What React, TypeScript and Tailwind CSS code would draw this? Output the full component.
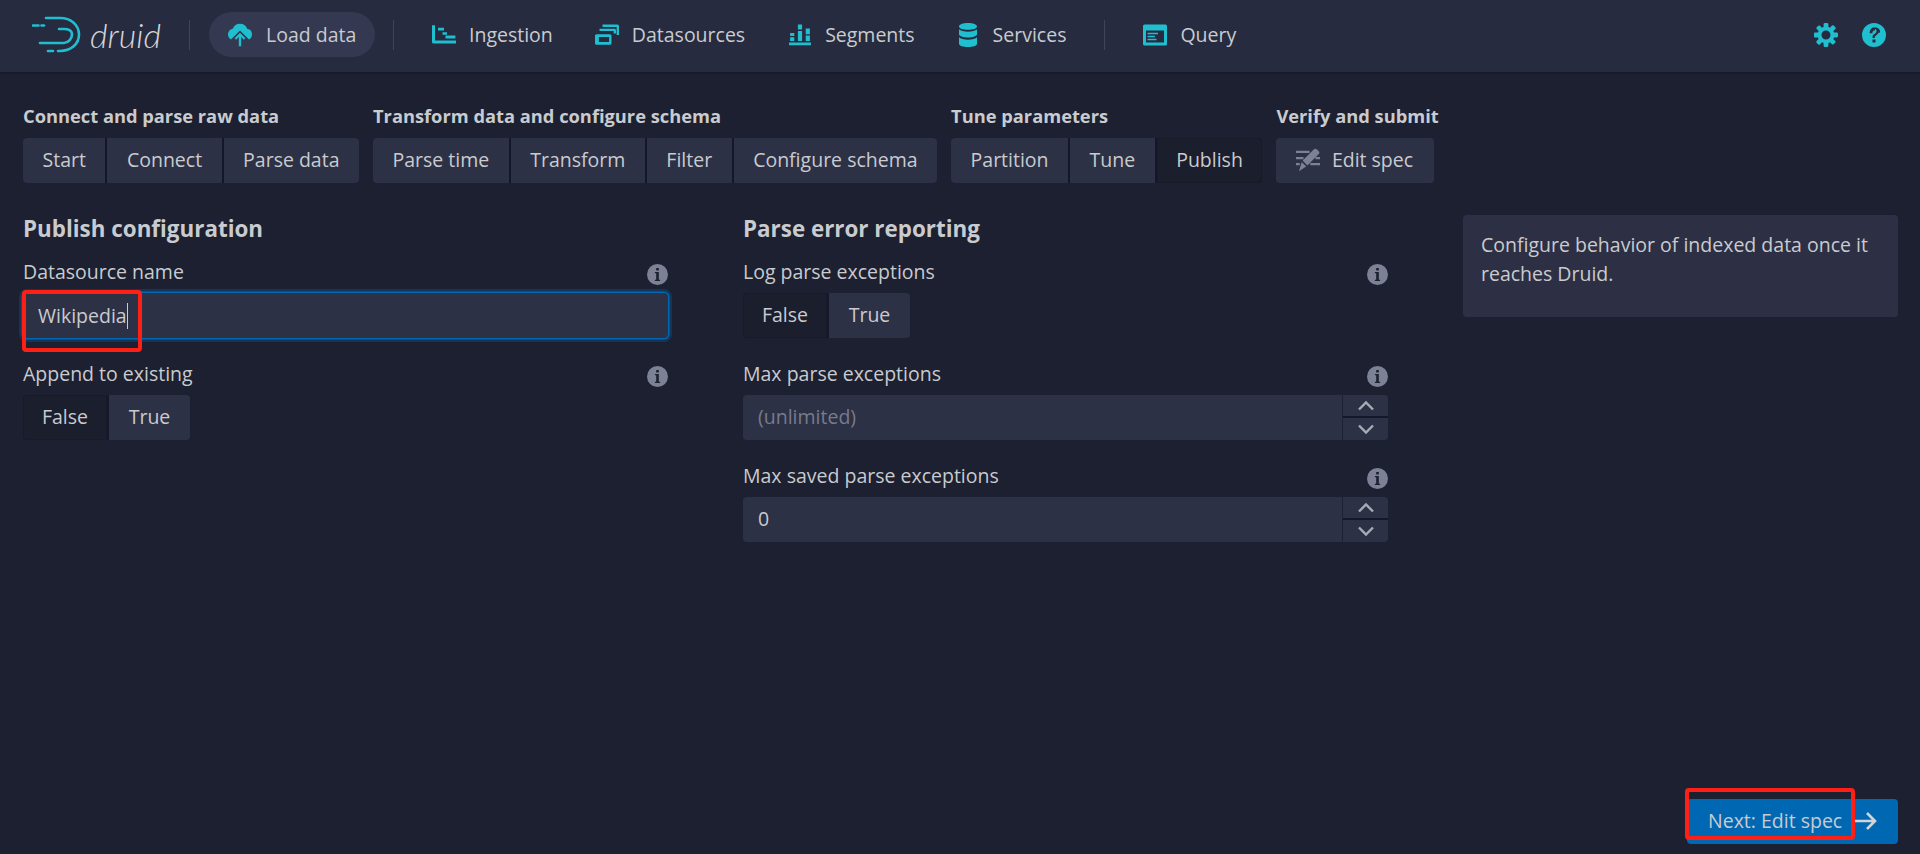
import type { ReactNode } from "react";

const TEAL = "#1fbfcf";

function Icon({ d, size = 24, color = TEAL, className = "" }: { d: string; size?: number; color?: string; className?: string }) {
  return (
    <svg width={size} height={size} viewBox="0 0 16 16" fill={color} className={className}>
      <path fillRule="evenodd" d={d} />
    </svg>
  );
}

const COG =
  "M15.19 6.39h-1.85c-.11-.37-.27-.71-.45-1.04l1.36-1.36c.31-.31.31-.82 0-1.13l-1.13-1.13a.803.803 0 00-1.13 0l-1.36 1.36c-.33-.17-.67-.33-1.04-.44V.79c0-.44-.36-.8-.8-.8h-1.6c-.44 0-.8.36-.8.8v1.86c-.39.12-.75.28-1.1.47l-1.3-1.3c-.3-.3-.79-.3-1.09 0L1.82 2.91c-.3.3-.3.79 0 1.09l1.3 1.3c-.2.34-.36.71-.48 1.1H.79c-.44 0-.8.36-.8.8v1.6c0 .44.36.8.8.8h1.85c.11.37.27.71.45 1.04l-1.36 1.36c-.31.31-.31.82 0 1.13l1.13 1.13c.31.31.82.31 1.13 0l1.36-1.36c.33.18.67.33 1.04.44v1.86c0 .44.36.8.8.8h1.6c.44 0 .8-.36.8-.8v-1.86c.39-.12.75-.28 1.1-.47l1.3 1.3c.3.3.79.3 1.09 0l1.09-1.09c.3-.3.3-.79 0-1.09l-1.3-1.3c.19-.35.36-.71.48-1.1h1.85c.44 0 .8-.36.8-.8v-1.6a.816.816 0 00-.81-.79zm-7.2 4.6c-1.66 0-3-1.34-3-3s1.34-3 3-3 3 1.34 3 3-1.34 3-3 3z";
const HELP =
  "M8 0a8 8 0 100 16A8 8 0 008 0zm1 13H7v-2h2v2zm1.93-6.52c-.14.32-.3.59-.5.81l-.66.65-.71.59c-.2.18-.37.38-.48.6-.11.22-.08.42-.08.87H7c0-.63.03-1.04.14-1.35.11-.31.27-.57.46-.78.2-.21.42-.4.67-.56.25-.16.48-.33.69-.52.21-.19.38-.39.51-.62.13-.23.2-.52.2-.87 0-.25-.05-.47-.14-.65a1.2 1.2 0 00-.77-.63C8.6 4.98 8.45 5 8.3 5c-.5 0-.8.2-1.03.5-.23.3-.34.8-.34 1.3H5.1c0-.62.07-1.2.27-1.7.2-.5.46-.9.8-1.25.33-.34.73-.6 1.2-.79A4.3 4.3 0 018.9 3c.6 0 1.05.1 1.45.27.4.17.72.4.96.66.24.26.41.55.52.85.11.3.17.6.17.87 0 .33-.07.61-.17.83z";
const INFO =
  "M8 0a8 8 0 100 16A8 8 0 008 0zM7 3h2v2H7V3zm3 10H6v-1h1V7H6V6h3v6h1v1z";
const DATABASE =
  "M8 4.5c3.3 0 6-1 6-2.25S11.3 0 8 0 2 1 2 2.25 4.7 4.5 8 4.5zM2 4.2v3.3C2 8.7 4.7 9.7 8 9.7s6-1 6-2.2V4.2c-1 1-3.3 1.6-6 1.6S3 5.2 2 4.2zm0 5.3v4.25C2 15 4.7 16 8 16s6-1 6-2.25V9.5c-1 1-3.3 1.6-6 1.6s-5-.6-6-1.6z";
const APPLICATION =
  "M1 1h14a1 1 0 011 1v12a1 1 0 01-1 1H1a1 1 0 01-1-1V2a1 1 0 011-1zm1 4v8h12V5H2zm1 1.5h7v1H3v-1zm0 2h5v1H3v-1zm0 2h6v1H3v-1z";
const GANTT =
  "M0 1.5h2V11.6H16v2H1a1 1 0 01-1-1zM4 3.2h4v1.8H4zM7 6.2h3v1.6H7zM9 8.4h6.6v1.9H9z";
const MULTI =
  "M5 1h10a1 1 0 011 1v6h-1.6V2.6H5zM3 3.8h10a1 1 0 011 1V7h-1.6V5.4H3zM1 7.5h9a1 1 0 011 1v5a1 1 0 01-1 1H1a1 1 0 01-1-1v-5a1 1 0 011-1zm1.6 1.9v3.2h6.8V9.4z";
const STACKED =
  "M6.6 1h2.8v3.4H6.6zM6.6 5.3h2.8v6.7H6.6zM1.4 6.7h2.8v2H1.4zM1.4 9.5h2.8V12H1.4zM11.8 3.7h2.8v3.8h-2.8zM11.8 8.4h2.8V12h-2.8zM.7 13h14.6v1.8H.7z";
const CLOUD =
  "M8 .5a5.2 5.2 0 014.8 3.3A3.9 3.9 0 0116 7.6c0 1.5-.8 2.8-2 3.4L8 5 2 11A3.8 3.8 0 010 7.6c0-1.8 1.2-3.4 3-3.8h.2A5.2 5.2 0 018 .5zM8 6.5l3.6 3.6-1 1L8.8 9.3V15.5H7.2V9.3l-1.8 1.8-1-1L8 6.5z";
const EDIT =
  "M12 .8c.5-.5 1.3-.5 1.8 0l1.4 1.4c.5.5.5 1.3 0 1.8L7.6 11.6 4.4 8.4zM3.8 9.4l3 3L2 15.5zM0 1.8h9v1.5H0zM0 6h5v1.5H0zM13 6h3v1.5h-3zM0 10h2.5v1.5H0zM9.5 10H16v1.5H9.5z";

function Logo() {
  return (
    <div className="flex items-center">
      <svg width="50" height="40" viewBox="0 0 50 40" fill="none" stroke={TEAL} strokeWidth="2.6" strokeLinecap="round">
        <path d="M14 3H28C39 3 47 10 47 19.5S39 36 28 36H26" />
        <path d="M8 28H32C36 28 40 24 40 19.5S36 14 32 14H27" />
        <path d="M1 10.5H6.5" />
        <path d="M9.5 10.5H12" />
        <path d="M16 36H21" />
      </svg>
      <span className="ml-[8px] text-[34px] leading-none font-light italic text-[#d4d5d8] [font-family:Lato,sans-serif]">druid</span>
    </div>
  );
}

function Sep() {
  return <div className="h-[30px] w-px bg-[#3f445a]" />;
}

function NavItem({ icon, label, className = "" }: { icon: string; label: string; className?: string }) {
  return (
    <div className={`flex items-center gap-[13px] ${className}`}>
      <Icon d={icon} />
      <span>{label}</span>
    </div>
  );
}

function StepButton({ children, active, first, last }: { children: ReactNode; active?: boolean; first?: boolean; last?: boolean }) {
  return (
    <div
      className={`flex h-[45px] items-center px-[19.5px] pb-[2px] ${active ? "bg-[#1b1e2d] shadow-[inset_0_0_0_1px_#171a28]" : "bg-[#2d3145]"} ${first ? "rounded-l-[4px]" : "ml-[2px]"} ${last ? "rounded-r-[4px]" : ""}`}
    >
      {children}
    </div>
  );
}

function StepGroup({ title, items, active }: { title: string; items: string[]; active?: string }) {
  return (
    <div>
      <div className="mb-[10px] h-[24px] text-[18.3px] leading-[24px] font-bold">{title}</div>
      <div className="flex rounded-[4px] bg-[#14172a]">
        {items.map((item, i) => (
          <StepButton key={item} active={item === active} first={i === 0} last={i === items.length - 1}>
            {item}
          </StepButton>
        ))}
      </div>
    </div>
  );
}

function Field({ label, children }: { label: string; children: ReactNode }) {
  return (
    <div className="mb-[24px]">
      <div className="mb-[9px] flex h-[24px] items-center justify-between leading-[24px]">
        <span>{label}</span>
        <Icon d={INFO} size={21} color="#7d8196" className="mt-[4px]" />
      </div>
      {children}
    </div>
  );
}

function Toggle() {
  return (
    <div className="flex h-[45px] w-[167px]">
      <div className="flex w-[86px] items-center justify-center rounded-l-[4px] border-r-2 border-[#15182a] bg-[#1b1e2d] pb-[2px] shadow-[inset_0_0_0_1px_#171a28]">False</div>
      <div className="flex w-[81px] items-center justify-center rounded-r-[4px] bg-[#2d3145] pb-[2px]">True</div>
    </div>
  );
}

function Chevron({ up }: { up?: boolean }) {
  return (
    <svg width="18" height="11" viewBox="0 0 18 11" fill="none" stroke="#a8abb5" strokeWidth="2.4">
      <path d={up ? "M2 9.5L9 2.5L16 9.5" : "M2 1.5L9 8.5L16 1.5"} />
    </svg>
  );
}

function NumberInput({ value, muted }: { value: string; muted?: boolean }) {
  return (
    <div className="flex h-[45px]">
      <div className={`flex flex-1 items-center rounded-l-[4px] bg-[#2d3145] px-[15px] pb-[1px] ${muted ? "text-[#777b8c]" : ""}`}>{value}</div>
      <div className="ml-px flex w-[45px] flex-col">
        <div className="flex h-[21px] items-center justify-center rounded-tr-[4px] bg-[#2d3145]">
          <Chevron up />
        </div>
        <div className="h-[2px] bg-[#15182a]" />
        <div className="flex h-[22px] items-center justify-center rounded-br-[4px] bg-[#2d3145]">
          <Chevron />
        </div>
      </div>
    </div>
  );
}

export default function App() {
  return (
    <div className="flex h-[854px] flex-col overflow-hidden bg-[#1c2030] text-[19.5px] text-[#c9cbcf] [font-family:'Open_Sans',sans-serif]">
      <header className="flex h-[72px] shrink-0 items-center bg-[#262b40] pr-[34px] pb-[3px] pl-[32px] shadow-[0_1px_2px_rgba(0,0,0,0.3)]">
        <Logo />
        <div className="ml-[28px]"><Sep /></div>
        <div className="ml-[19px] flex h-[45px] w-[166px] items-center gap-[14px] rounded-full bg-[#343851] pl-[19px]">
          <Icon d={CLOUD} />
          <span>Load data</span>
        </div>
        <div className="ml-[18px]"><Sep /></div>
        <NavItem icon={GANTT} label="Ingestion" className="ml-[38px]" />
        <NavItem icon={MULTI} label="Datasources" className="ml-[42px]" />
        <NavItem icon={STACKED} label="Segments" className="ml-[43px]" />
        <NavItem icon={DATABASE} label="Services" className="ml-[41px]" />
        <div className="ml-[38px]"><Sep /></div>
        <NavItem icon={APPLICATION} label="Query" className="ml-[38px]" />
        <div className="ml-auto flex items-center gap-[24px]">
          <Icon d={COG} />
          <Icon d={HELP} />
        </div>
      </header>

      <main className="flex flex-1 flex-col pt-[32px] pr-[22px] pb-[10px] pl-[23px]">
        <div className="flex gap-[14px]">
          <StepGroup title="Connect and parse raw data" items={["Start", "Connect", "Parse data"]} />
          <StepGroup title="Transform data and configure schema" items={["Parse time", "Transform", "Filter", "Configure schema"]} />
          <StepGroup title="Tune parameters" items={["Partition", "Tune", "Publish"]} active="Publish" />
          <div className="w-[158px]">
            <div className="mb-[10px] h-[24px] text-[18.3px] leading-[24px] font-bold whitespace-nowrap">Verify and submit</div>
            <StepButton first last>
              <Icon d={EDIT} color="#7d8196" className="mr-[12px]" />
              Edit spec
            </StepButton>
          </div>
        </div>

        <div className="mt-[32px] flex gap-[75px]">
          <section className="w-[645px]">
            <h2 className="mb-[15px] h-[30px] text-[22.4px] leading-[28px] font-bold">Publish configuration</h2>
            <Field label="Datasource name">
              <div className="relative flex h-[45px] items-center rounded-[4px] bg-[#2d3145] px-[15px] shadow-[0_0_0_1.5px_#0068b3,0_0_0_4px_rgba(0,104,179,0.3)]">
                <span>Wikipedia</span>
                <span className="h-[26px] w-px bg-[#c9cbcf]" />
                <div className="absolute top-[-3px] left-[-1px] h-[62px] w-[120px] rounded-[4px] border-4 border-[#ff2015]" />
              </div>
            </Field>
            <Field label="Append to existing">
              <Toggle />
            </Field>
          </section>

          <section className="w-[645px]">
            <h2 className="mb-[15px] h-[30px] text-[22.4px] leading-[28px] font-bold">Parse error reporting</h2>
            <Field label="Log parse exceptions">
              <Toggle />
            </Field>
            <Field label="Max parse exceptions">
              <NumberInput value="(unlimited)" muted />
            </Field>
            <Field label="Max saved parse exceptions">
              <NumberInput value="0" />
            </Field>
          </section>

          <aside className="h-[102px] w-[435px] rounded-[4px] bg-[#2d3044] px-[18px] pt-[15px] leading-[29px]">
            Configure behavior of indexed data once it reaches Druid.
          </aside>
        </div>

        <div className="mt-auto flex justify-end">
          <div className="relative flex h-[45px] w-[211px] items-center rounded-[4px] bg-[#0068b3] pb-[1px] pl-[21px]">
            <span>Next: Edit spec</span>
            <svg width="24" height="20" viewBox="0 0 24 20" fill="none" stroke="#d2d4d6" strokeWidth="2.6" className="ml-[12px]">
              <path d="M1 10H21M13 2L21 10L13 18" />
            </svg>
            <div className="absolute top-[-11px] left-[-2px] h-[52px] w-[170px] rounded-[4px] border-4 border-[#ff2015]" />
          </div>
        </div>
      </main>
    </div>
  );
}
